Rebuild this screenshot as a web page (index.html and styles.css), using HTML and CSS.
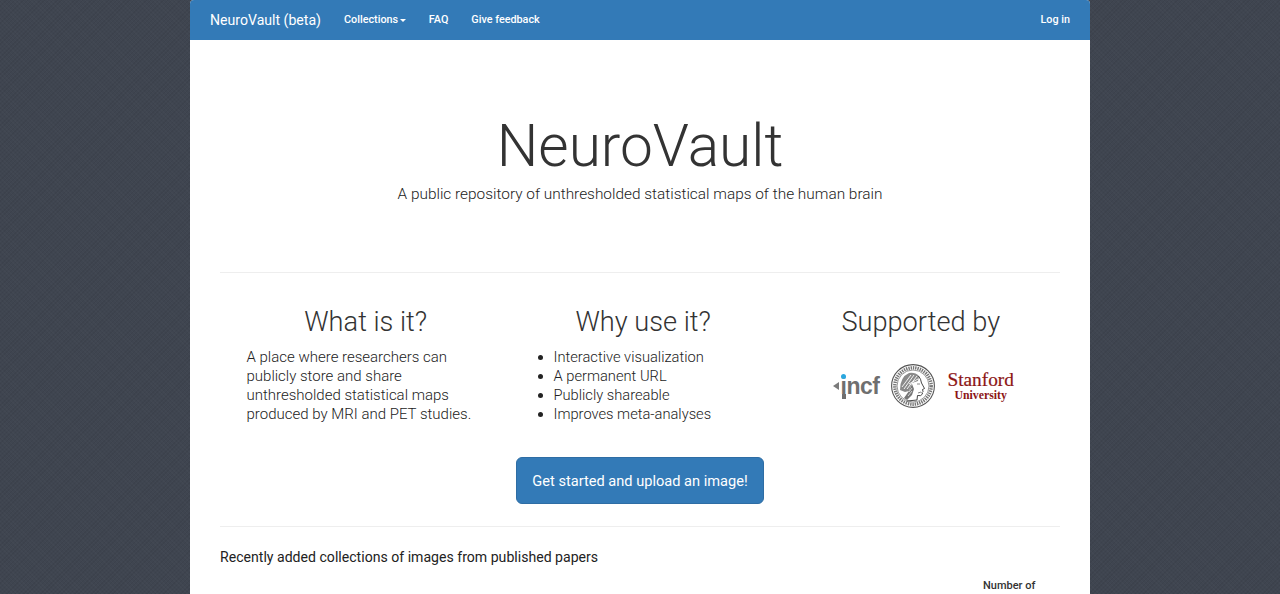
FILE: index.html
```html
<!DOCTYPE html>
<html lang="en">
<head>
    <meta charset="UTF-8">
    <title>NeuroVault</title>
    <link rel="stylesheet" href="styles.css">
</head>
<body>
    <div class="page">
        <nav class="navbar">
            <a class="brand" href="#">NeuroVault (beta)</a>
            <ul class="nav-links">
                <li><a href="#">Collections <span class="caret"></span></a></li>
                <li><a href="#">FAQ</a></li>
                <li><a href="#">Give feedback</a></li>
            </ul>
            <a class="login" href="#">Log in</a>
        </nav>

        <div class="content">
            <div class="jumbotron">
                <h1>NeuroVault</h1>
                <p>A public repository of unthresholded statistical maps of the human brain</p>
            </div>

            <hr>

            <div class="row">
                <div class="col">
                    <h2>What is it?</h2>
                    <p class="what">A place where researchers can publicly store and share unthresholded statistical maps produced by MRI and PET studies.</p>
                </div>
                <div class="col">
                    <h2>Why use it?</h2>
                    <ul class="why">
                        <li>Interactive visualization</li>
                        <li>A permanent URL</li>
                        <li>Publicly shareable</li>
                        <li>Improves meta-analyses</li>
                    </ul>
                </div>
                <div class="col">
                    <h2>Supported by</h2>
                    <div class="logos">
                        <div class="incf">
                            <svg class="incf-arrow" width="6" height="8" viewBox="0 0 6 8"><path d="M0 4 L6 0 V8 Z" fill="#7b7b7b"/></svg>
                            <span class="incf-i"><span class="incf-dot"></span>i<span class="incf-foot"></span></span><span>ncf</span>
                        </div>
                        <svg class="mpg" width="44" height="44" viewBox="0 0 44 44">
                            <circle cx="22" cy="22" r="21.4" fill="#fff" stroke="#555" stroke-width="1.1"/>
                            <circle cx="22" cy="22" r="18.2" fill="#fff" stroke="#777" stroke-width="3.4" stroke-dasharray="1.4 0.9"/>
                            <circle cx="22" cy="22" r="16" fill="#fff" stroke="#555" stroke-width="0.6"/>
                            <!-- helmet and plume -->
                            <path d="M9 26 Q9 13 18 9 Q24 8 28 12 L27 17 L21 19 L18 27 L14 28 Z" fill="#8a8a8a"/>
                            <path d="M11 23 L20 11 M13 25 L23 11 M16 25 L26 12 M18 20 L27 15" fill="none" stroke="#fff" stroke-width="0.9"/>
                            <!-- hair -->
                            <path d="M18 27 L21 20 L23 25 L21 31 L16 36 L13 34 Z" fill="#777"/>
                            <path d="M18 28 L21 24 M17 32 L21 27" fill="none" stroke="#fff" stroke-width="0.7"/>
                            <!-- face -->
                            <path d="M27.5 12 Q30 15 30.5 19 L33.5 24.5 L31.5 25.5 L32 27.5 L31 28.5 L31.5 30 Q30 32.5 26.5 31.5 L26 36 L16 37" fill="none" stroke="#333" stroke-width="0.9"/>
                            <path d="M26 20 L29 20 M27 29 L30 28" fill="none" stroke="#555" stroke-width="0.7"/>
                        </svg>
                        <div class="stanford">
                            <div class="stanford-name">Stanford</div>
                            <div class="stanford-sub">University</div>
                        </div>
                    </div>
                </div>
            </div>

            <div class="cta">
                <a class="btn" href="#">Get started and upload an image!</a>
            </div>

            <hr class="lower">

            <h4>Recently added collections of images from published papers</h4>

            <table class="papers">
                <tr>
                    <th class="name-col"></th>
                    <th class="count-col">Number of</th>
                </tr>
            </table>
        </div>
    </div>
</body>
</html>
```

FILE: styles.css
```css
html, body {
    height: 100%;
    margin: 0;
    overflow: hidden;
}
body {
    font-family: Roboto, "Liberation Sans", Arial, sans-serif;
    font-size: 14px;
    font-weight: 300;
    line-height: 1.43;
    color: #333333;
    background-color: #3f4550;
    background-image:
        repeating-linear-gradient(45deg, rgba(255, 255, 255, 0.015) 0, rgba(255, 255, 255, 0.015) 1px, transparent 1px, transparent 3px),
        repeating-linear-gradient(-45deg, rgba(0, 0, 0, 0.05) 0, rgba(0, 0, 0, 0.05) 1px, transparent 1px, transparent 3px);
}
a {
    text-decoration: none;
}
.page {
    width: 900px;
    margin: 0 auto;
    height: 100%;
    overflow: hidden;
    background-color: #ffffff;
    border-radius: 4px 4px 0 0;
}

/* top bar */
.navbar {
    display: flex;
    align-items: center;
    height: 40px;
    padding: 0 20px;
    box-sizing: border-box;
    background-color: #337ab7;
}
.navbar a {
    color: #ffffff;
}
.brand {
    margin-right: 23px;
    font-size: 14.1px;
    font-weight: 400;
}
.nav-links {
    display: flex;
    gap: 23px;
    list-style: none;
    margin: 0;
    padding: 0;
    font-size: 10.8px;
    font-weight: 500;
}
.login {
    margin-left: auto;
    font-size: 10.8px;
    font-weight: 500;
}
.caret {
    display: inline-block;
    width: 0;
    height: 0;
    margin-left: -1px;
    vertical-align: middle;
    border-top: 3px solid #ffffff;
    border-left: 3px solid transparent;
    border-right: 3px solid transparent;
}

.content {
    padding: 0 30px;
}
.jumbotron {
    padding-top: 71px;
    height: 232px;
    box-sizing: border-box;
    text-align: center;
}
.jumbotron h1 {
    margin: 0;
    font-size: 58.6px;
    font-weight: 300;
    line-height: 70px;
}
.jumbotron p {
    margin: 1px 0 0;
    font-size: 15.4px;
    line-height: 24px;
    color: #222222;
}
hr {
    margin: 0;
    border: 0;
    border-top: 1px solid #eeeeee;
}

/* three columns */
.row {
    display: grid;
    grid-template-columns: repeat(3, 277.5px);
    padding: 32px 0 0 7px;
}
.col h2 {
    margin: 0 0 9px;
    font-size: 27.2px;
    font-weight: 300;
    line-height: 34px;
    text-align: center;
}
.what {
    margin: 0 0 0 19.5px;
    width: 235px;
    font-size: 15px;
    line-height: 19px;
    color: #222222;
}
.why {
    margin: 0 0 0 20px;
    padding-left: 29px;
    font-size: 14.7px;
    line-height: 19px;
    color: #222222;
}
.logos {
    display: flex;
    align-items: center;
    justify-content: center;
    gap: 12px;
    height: 44px;
    margin: 25px 0 0 5px;
}
.incf {
    display: flex;
    align-items: center;
    font-family: "Liberation Sans", Arial, sans-serif;
    font-size: 23px;
    font-weight: bold;
    color: #6f6f6f;
    letter-spacing: -0.5px;
}
.incf-arrow {
    margin-right: 2px;
}
.incf-i {
    position: relative;
}
.incf-dot {
    position: absolute;
    left: 0.5px;
    top: 4.5px;
    width: 5px;
    height: 5px;
    border-radius: 50%;
    background-color: #2aa7df;
}
.incf-foot {
    position: absolute;
    left: 1px;
    top: 24px;
    width: 4.5px;
    height: 5px;
    background-color: #6f6f6f;
}
.stanford {
    text-align: center;
    font-family: "Liberation Serif", "Times New Roman", serif;
    color: #8c1515;
}
.stanford-name {
    font-size: 19.3px;
    line-height: 18px;
    -webkit-text-stroke: 0.2px #8c1515;
}
.stanford-sub {
    font-size: 11.8px;
    font-weight: bold;
    line-height: 13px;
}

.cta {
    display: flex;
    justify-content: center;
    margin-top: 33px;
}
.btn {
    padding: 13px 15px 11px;
    font-size: 14.6px;
    font-weight: 400;
    line-height: 21px;
    color: #ffffff;
    background-color: #337ab7;
    border: 1px solid #2e6da4;
    border-radius: 6px;
}
.lower {
    margin-top: 22px;
}
h4 {
    margin: 20px 0 0;
    font-size: 14.1px;
    font-weight: 400;
    line-height: 20px;
    color: #222222;
}
.papers {
    width: 100%;
    margin-top: 11px;
    border-collapse: collapse;
    font-size: 11px;
}
.papers th {
    padding: 0;
    font-weight: 500;
}
.count-col {
    width: 77px;
    text-align: left;
}
```
